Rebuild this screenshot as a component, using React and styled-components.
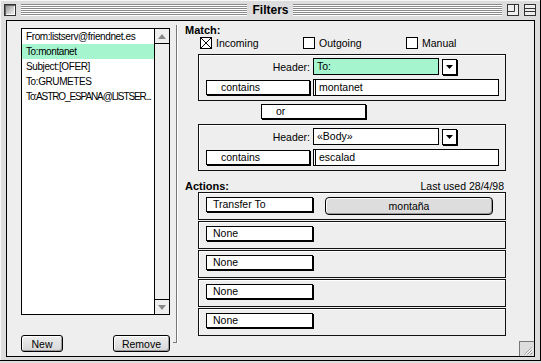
import React from "react"
import styled, { createGlobalStyle } from "styled-components"

const GlobalStyle = createGlobalStyle`
  * { box-sizing: border-box; }
  html, body {
    margin: 0;
    padding: 0;
    background: #dddddd;
  }
  body {
    font-family: "Liberation Sans", Arial, sans-serif;
    font-size: 10.5px;
    color: #000;
  }
`

const RULES = [
  { name: "From:listserv@friendnet.es" },
  { name: "To:montanet" },
  { name: "Subject:[OFER]" },
  { name: "To:GRUMETES" },
  { name: "To:ASTRO_ESPANA@LISTSER...", tight: true },
]

const ACTIONS = ["Transfer To", "None", "None", "None", "None"]

const App = () => {
  return (
    <>
      <GlobalStyle />
      <Window>
        <TitleBar>
          <TitleSide>
            <CloseBox />
            <Stripes />
          </TitleSide>
          <Title>Filters</Title>
          <TitleSide>
            <Stripes />
            <WidgetBox>
              <svg width="12" height="12" viewBox="0 0 12 12">
                <rect x="0.5" y="0.5" width="11" height="11" fill="#eee" stroke="#333" />
                <path d="M0.5 7.5H7.5V0.5" fill="none" stroke="#333" />
              </svg>
            </WidgetBox>
            <WidgetBox>
              <svg width="12" height="12" viewBox="0 0 12 12">
                <rect x="0.5" y="0.5" width="11" height="11" fill="#eee" stroke="#333" />
                <path d="M0.5 4.5H11.5M0.5 7.5H11.5" fill="none" stroke="#333" />
              </svg>
            </WidgetBox>
          </TitleSide>
        </TitleBar>

        <Content>
          <LeftPane>
            <List>
              <Rows>
                {RULES.map((rule, i) => (
                  <Row key={i} selected={i === 1} tight={rule.tight}>
                    {rule.name}
                  </Row>
                ))}
              </Rows>
              <Scrollbar>
                <ScrollArrow>
                  <svg width="8" height="5" viewBox="0 0 8 5">
                    <path d="M0 5L4 0L8 5Z" fill="#888" />
                  </svg>
                </ScrollArrow>
                <ScrollArrow bottom>
                  <svg width="8" height="5" viewBox="0 0 8 5">
                    <path d="M0 0L4 5L8 0Z" fill="#888" />
                  </svg>
                </ScrollArrow>
              </Scrollbar>
            </List>
            <ButtonRow>
              <PushButton width={42}>New</PushButton>
              <PushButton width={57}>Remove</PushButton>
            </ButtonRow>
          </LeftPane>

          <Divider />

          <RightPane>
            <SectionLabel>Match:</SectionLabel>
            <CheckRow>
              <CheckItem>
                <CheckBox>
                  <svg width="10" height="10" viewBox="0 0 10 10">
                    <path d="M0 0L10 10M10 0L0 10" stroke="#000" strokeWidth="1" />
                  </svg>
                </CheckBox>
                Incoming
              </CheckItem>
              <CheckItem>
                <CheckBox />
                Outgoing
              </CheckItem>
              <CheckItem>
                <CheckBox />
                Manual
              </CheckItem>
            </CheckRow>

            <GroupBox>
              <FieldRow>
                <HeaderLabel>Header:</HeaderLabel>
                <TextField width={126} highlight>
                  To:
                </TextField>
                <ArrowButton>
                  <svg width="7" height="4" viewBox="0 0 7 4">
                    <path d="M0 0H7L3.5 4Z" fill="#000" />
                  </svg>
                </ArrowButton>
              </FieldRow>
              <FieldRow>
                <PopupField width={104} pad={14}>
                  contains
                </PopupField>
                <TextField width={186} double>
                  montanet
                </TextField>
              </FieldRow>
            </GroupBox>

            <OrPopup>or</OrPopup>

            <GroupBox>
              <FieldRow>
                <HeaderLabel>Header:</HeaderLabel>
                <TextField width={126}>«Body»</TextField>
                <ArrowButton>
                  <svg width="7" height="4" viewBox="0 0 7 4">
                    <path d="M0 0H7L3.5 4Z" fill="#000" />
                  </svg>
                </ArrowButton>
              </FieldRow>
              <FieldRow>
                <PopupField width={104} pad={14}>
                  contains
                </PopupField>
                <TextField width={186} double>
                  escalad
                </TextField>
              </FieldRow>
            </GroupBox>

            <ActionsHeader>
              <SectionLabel>Actions:</SectionLabel>
              <LastUsed>Last used 28/4/98</LastUsed>
            </ActionsHeader>

            <ActionList>
              {ACTIONS.map((action, i) => (
                <ActionBox key={i}>
                  <PopupField width={107} pad={6}>
                    {action}
                  </PopupField>
                  {i === 0 && <MailboxButton>montaña</MailboxButton>}
                </ActionBox>
              ))}
            </ActionList>
          </RightPane>

          <GrowBox>
            <svg width="15" height="15" viewBox="0 0 15 15">
              <path
                d="M13 5L5 13M13 8L8 13M13 11L11 13"
                stroke="#888"
                strokeWidth="1"
              />
              <path d="M14 5L6 13M14 8L9 13" stroke="#fff" strokeWidth="1" />
            </svg>
          </GrowBox>
        </Content>
      </Window>
    </>
  )
}

export default App

const Window = styled.div`
  position: relative;
  width: 541px;
  height: 361px;
  display: flex;
  flex-direction: column;
  background: #dddddd;
  border-right: 1px solid #000;
  border-bottom: 1px solid #000;
  box-shadow: inset 1px 1px 0 #f6f6f6;
`

const TitleBar = styled.div`
  height: 20px;
  display: grid;
  grid-template-columns: 1fr auto 1fr;
  align-items: center;
  padding: 0 4px 0 4px;
`

const TitleSide = styled.div`
  display: flex;
  align-items: center;
  gap: 5px;
`

const CloseBox = styled.div`
  width: 12px;
  height: 12px;
  border: 1px solid #333;
  background: linear-gradient(135deg, #888 0%, #ccc 55%, #f4f4f4 100%);
  box-shadow: inset 1px 1px 0 #666, inset -1px -1px 0 #fff;
`

const Stripes = styled.div`
  flex: 1;
  height: 12px;
  background: repeating-linear-gradient(
    to bottom,
    #8a8a8a 0px,
    #8a8a8a 1px,
    #ffffff 1px,
    #ffffff 2px
  );
`

const Title = styled.div`
  padding: 0 4px 0 5px;
  font-size: 12px;
  font-weight: bold;
  line-height: 20px;
`

const WidgetBox = styled.div`
  display: flex;
  width: 12px;
  height: 12px;
`

const Content = styled.div`
  position: relative;
  flex: 1;
  display: flex;
  margin: 0 5px 3px 6px;
  border: 1px solid #000;
  background: #eeeeee;
`

const LeftPane = styled.div`
  width: 166px;
  display: flex;
  flex-direction: column;
  padding: 7px 3px 0 14px;
`

const List = styled.div`
  display: flex;
  width: 149px;
  height: 287px;
  border: 1px solid #000;
  background: #fff;
`

const Rows = styled.div`
  flex: 1;
  min-width: 0;
`

const Row = styled.div`
  height: 15px;
  line-height: 15px;
  padding-left: 4px;
  font-size: 10px;
  letter-spacing: ${(p) => (p.tight ? -1.1 : -0.4)}px;
  white-space: nowrap;
  background: ${(p) => (p.selected ? "#a5f5cf" : "transparent")};
`

const Scrollbar = styled.div`
  width: 15px;
  display: flex;
  flex-direction: column;
  justify-content: space-between;
  border-left: 1px solid #000;
  background: #eeeeee;
`

const ScrollArrow = styled.div`
  height: 15px;
  display: flex;
  align-items: center;
  justify-content: center;
  ${(p) => (p.bottom ? "border-top: 1px solid #000;" : "border-bottom: 1px solid #000;")}
`

const ButtonRow = styled.div`
  width: 149px;
  margin-top: 20px;
  display: flex;
  justify-content: space-between;
`

const PushButton = styled.div`
  width: ${(p) => p.width}px;
  height: 17px;
  display: flex;
  align-items: center;
  justify-content: center;
  border: 1px solid #000;
  border-radius: 3px;
  background: linear-gradient(to bottom, #eeeeee, #d6d6d6);
  box-shadow: inset 1px 1px 0 #fff, inset -1px -1px 0 #999;
`

const Divider = styled.div`
  width: 4px;
  margin: 4px 0 13px 0;
  border-right: 1px solid #777;
  border-bottom: 1px solid #777;
  box-shadow: 1px 0 0 #fff;
`

const RightPane = styled.div`
  flex: 1;
  display: flex;
  flex-direction: column;
  padding: 3px 0 0 8px;
`

const SectionLabel = styled.div`
  height: 13px;
  line-height: 13px;
  font-size: 11px;
  font-weight: bold;
`

const CheckRow = styled.div`
  height: 12px;
  display: grid;
  grid-template-columns: 103px 103px auto;
  padding-left: 15px;
`

const CheckItem = styled.div`
  display: flex;
  align-items: center;
  gap: 4px;
  line-height: 12px;
`

const CheckBox = styled.div`
  width: 12px;
  height: 12px;
  display: flex;
  border: 1px solid #000;
  background: #fff;
`

const GroupBox = styled.div`
  width: 308px;
  height: 47px;
  margin: 5px 0 0 13px;
  display: flex;
  flex-direction: column;
  gap: 4px;
  padding: 3px 0 0 7px;
  border: 1px solid #111;
  box-shadow: inset 1px 1px 0 #fff;
`

const FieldRow = styled.div`
  height: 17px;
  display: flex;
  align-items: center;
  gap: 3px;
`

const HeaderLabel = styled.div`
  width: 104px;
  text-align: right;
`

const TextField = styled.div`
  width: ${(p) => p.width}px;
  height: 17px;
  line-height: 15px;
  padding-left: ${(p) => (p.double ? 5 : 3)}px;
  border: 1px solid #000;
  background: ${(p) => (p.highlight ? "#a5f5cf" : "#fff")};
  box-shadow: ${(p) => (p.double ? "inset 1px 0 0 #fff, inset 2px 0 0 #000" : "none")};
  white-space: nowrap;
`

const ArrowButton = styled.div`
  width: 15px;
  height: 16px;
  display: flex;
  align-items: center;
  justify-content: center;
  border: 1px solid #000;
  background: #fff;
  box-shadow: 1px 1px 0 #000;
`

const PopupField = styled.div`
  width: ${(p) => p.width}px;
  height: 15px;
  line-height: 13px;
  padding-left: ${(p) => p.pad}px;
  border: 1px solid #000;
  background: #fff;
  box-shadow: 1px 1px 0 #000;
  white-space: nowrap;
`

const OrPopup = styled(PopupField).attrs({ width: 105, pad: 14 })`
  margin: 3px 0 0 76px;
`

const ActionsHeader = styled.div`
  width: 319px;
  height: 12px;
  margin-top: 9px;
  display: flex;
  align-items: center;
  justify-content: space-between;
`

const LastUsed = styled.div`
  line-height: 12px;
`

const ActionList = styled.div`
  display: flex;
  flex-direction: column;
  gap: 1px;
  margin-left: 13px;
`

const ActionBox = styled.div`
  width: 308px;
  height: 28px;
  display: flex;
  align-items: flex-start;
  padding: 4px 0 0 7px;
  border: 1px solid #111;
  box-shadow: inset 1px 1px 0 #fff;
`

const MailboxButton = styled(PushButton)`
  width: 168px;
  height: 18px;
  margin-left: 12px;
  border-radius: 4px;
  background: #dddddd;
`

const GrowBox = styled.div`
  position: absolute;
  right: 0;
  bottom: 0;
  width: 15px;
  height: 15px;
  display: flex;
  border-left: 1px solid #777;
  border-top: 1px solid #777;
  background: #dddddd;
`
